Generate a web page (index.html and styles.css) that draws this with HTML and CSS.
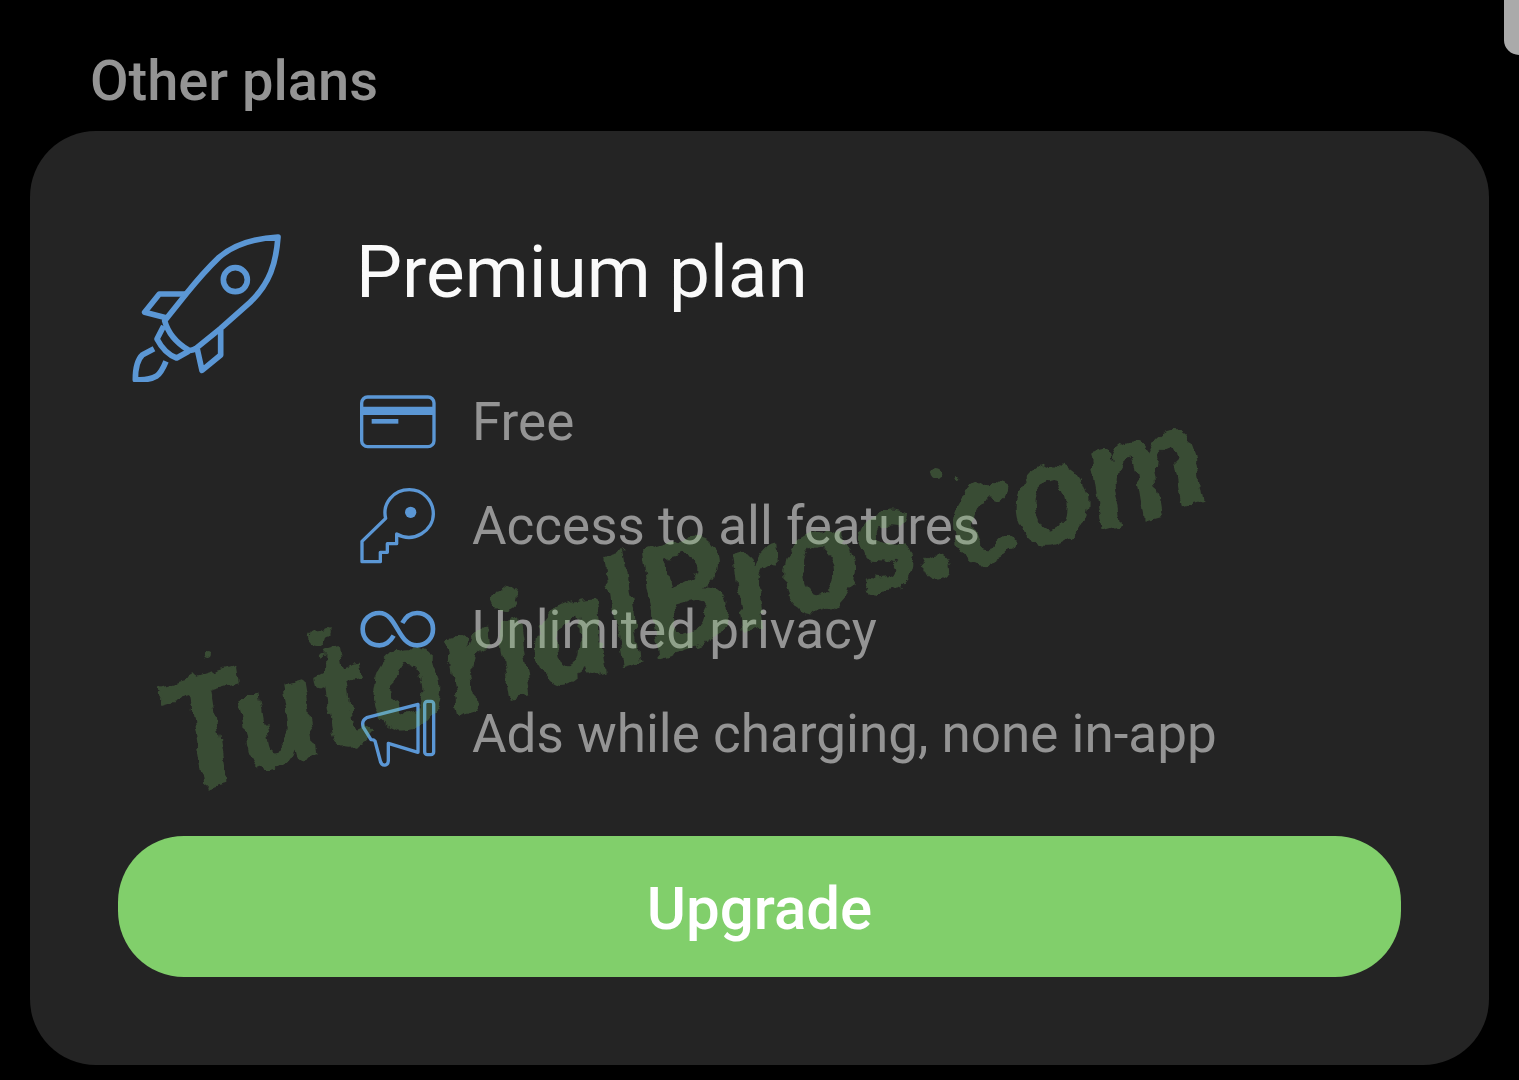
FILE: index.html
```html
<!DOCTYPE html>
<html lang="en">
<head>
    <meta charset="UTF-8">
    <meta name="viewport" content="width=device-width, initial-scale=1.0">
    <title>Other plans</title>
    <link rel="stylesheet" href="styles.css">
</head>
<body>
    <main class="page">
        <h1 class="section-title">Other plans</h1>

        <section class="card">
            <div class="plan">
                <svg class="plan-icon" viewBox="36 36 450 450" aria-hidden="true">
                    <path d="M474 51C400 55 340 75 297 112Q250 157 200 220L134 302Q148 355 205 390Q216 394 228 385L302 325L390 247C450 190 468 130 474 51Z"/>
                    <path d="M131 318L111 357C125 384 145 405 170 414L206 394"/>
                    <path d="M198 222H118L74 277L138 293"/>
                    <path d="M302 330V405L246 451L232 388"/>
                    <path d="M102 386L68 404Q46 424 46 479Q86 482 110 468Q124 458 138 424"/>
                    <circle cx="346" cy="179" r="36"/>
                </svg>

                <div class="plan-body">
                    <h2 class="plan-name">Premium plan</h2>
                    <ul class="features">
                        <li>
                            <svg class="feature-icon" viewBox="33 12 228 228" aria-hidden="true">
                                <rect x="38" y="51" width="217" height="149" rx="18"/>
                                <path class="solid" d="M38 80H255V105H38Z"/>
                                <path class="thick" d="M68 124H148"/>
                            </svg>
                            <span>Free</span>
                        </li>
                        <li>
                            <svg class="feature-icon" viewBox="33 324 228 228" aria-hidden="true">
                                <path d="M110 415L39 484V545H94V517H115V491H143V462C195 492 253 450 253 402C253 360 220 329 181 329C134 329 99 370 110 415Z"/>
                                <circle class="solid" cx="185" cy="397" r="17"/>
                            </svg>
                            <span>Access to all features</span>
                        </li>
                        <li>
                            <svg class="feature-icon thick" viewBox="33 6 228 228" aria-hidden="true">
                                <path d="M134 137C122 158 108 166 91 166C61 166 41 145 41 117S63 69 91 69C145 69 145 166 204 166C232 166 252 145 252 117S232 69 204 69C184 69 171 79 160 99"/>
                            </svg>
                            <span>Unlimited privacy</span>
                        </li>
                        <li>
                            <svg class="feature-icon" viewBox="33 318 228 228" aria-hidden="true">
                                <path d="M207 343V487L118 460V508C119 530 98 530 94 513L78 453Q74 448 66 449L43 412Q36 392 53 383Z"/>
                                <rect x="227" y="334" width="27" height="160" rx="8"/>
                            </svg>
                            <span>Ads while charging, none in-app</span>
                        </li>
                    </ul>
                </div>
            </div>

            <button class="upgrade" type="button">Upgrade</button>

            <svg class="watermark" viewBox="0 0 1460 934">
                <!-- ragged brush edge -->
                <filter id="brush" x="-5%" y="-5%" width="110%" height="110%">
                    <feTurbulence type="fractalNoise" baseFrequency="0.06" numOctaves="3" seed="4"/>
                    <feDisplacementMap in="SourceGraphic" scale="14" xChannelSelector="R" yChannelSelector="G"/>
                </filter>
                <g class="watermark-ink" filter="url(#brush)">
                    <text x="150" y="664" transform="rotate(-16 150 664)">TutorialBros.com</text>
                    <circle cx="175" cy="523" r="4"/>
                    <circle cx="130" cy="565" r="3"/>
                    <ellipse cx="289" cy="506" rx="10" ry="8"/>
                    <circle cx="298" cy="500" r="3"/>
                    <circle cx="292" cy="526" r="2"/>
                    <circle cx="421" cy="529" r="4"/>
                    <circle cx="582" cy="453" r="6"/>
                    <circle cx="628" cy="434" r="3"/>
                    <circle cx="725" cy="443" r="4"/>
                    <ellipse cx="908" cy="343" rx="7" ry="6"/>
                    <circle cx="928" cy="346" r="2"/>
                </g>
            </svg>
        </section>
    </main>
    <div class="scroll-thumb"></div>
</body>
</html>
```

FILE: styles.css
```css
* {
    box-sizing: border-box;
}
body {
    margin: 0;
    background-color: #000;
    color: #949494;
    font-family: Roboto, sans-serif;
}
.page {
    padding: 48px 30px 15px;
}
.section-title {
    margin: 0 0 17px;
    padding: 0 60px;
    font-size: 56px;
    font-weight: 500;
    line-height: 66px;
}
.card {
    position: relative;
    padding: 99px 88px 88px;
    border-radius: 66px;
    background-color: #242424;
}
.plan {
    display: flex;
    align-items: flex-start;
    gap: 74px;
    margin-bottom: 50px;
    padding-left: 14px;
}
.plan-icon {
    flex: none;
    width: 150px;
    height: 150px;
    margin-top: 2px;
    fill: none;
    stroke: #5b97d5;
    stroke-width: 17;
    stroke-linejoin: round;
}
.plan-body {
    flex: 1;
}
.plan-name {
    margin: 0 0 56px;
    color: #fafafa;
    font-size: 73px;
    font-weight: 400;
    line-height: 84px;
}
.features {
    margin: 0;
    padding: 0 0 0 4px;
    list-style: none;
    font-size: 53px;
}
.features li {
    display: flex;
    align-items: center;
    gap: 36px;
    height: 104px;
}
.feature-icon {
    flex: none;
    width: 76px;
    height: 76px;
    fill: none;
    stroke: #5b97d5;
    stroke-width: 10;
    stroke-linejoin: round;
}
.feature-icon .solid {
    fill: #5b97d5;
    stroke: none;
}
.feature-icon.thick,
.feature-icon .thick {
    stroke-width: 14;
}
.upgrade {
    display: block;
    width: 100%;
    height: 141px;
    padding: 4px 0 0;
    border: none;
    border-radius: 66px;
    background-color: #81cf6b;
    color: #fff;
    font-family: inherit;
    font-size: 60px;
    font-weight: 500;
    cursor: pointer;
}
.watermark {
    position: absolute;
    top: 0;
    left: 0;
    width: 100%;
    height: 100%;
    pointer-events: none;
}
.watermark-ink {
    fill: #81cf6b;
    opacity: 0.23;
}
.watermark text {
    font-family: Lato, sans-serif;
    font-size: 150px;
    font-style: italic;
    font-weight: 900;
}
.scroll-thumb {
    position: absolute;
    top: 0;
    right: 0;
    width: 15px;
    height: 55px;
    border-bottom-left-radius: 15px;
    background-color: #aaa;
}
```
